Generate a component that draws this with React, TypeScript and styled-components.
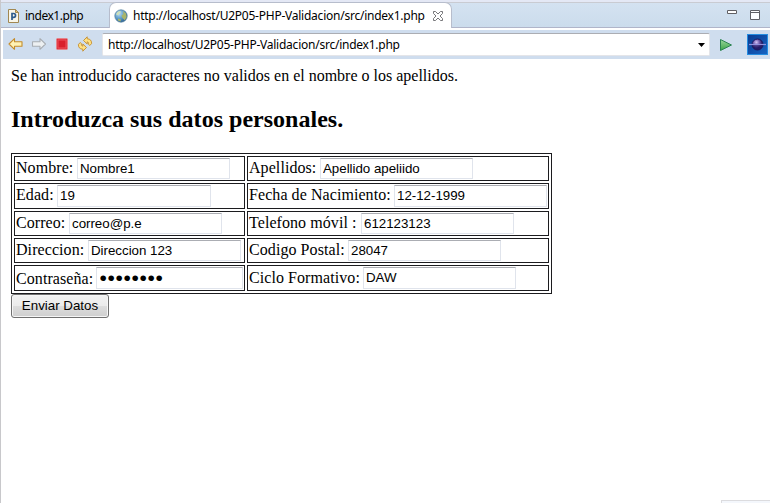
import React from "react";
import styled, { createGlobalStyle } from "styled-components";

const GlobalStyle = createGlobalStyle`
  * { box-sizing: border-box; }
  html, body { margin: 0; background: #fff; }
  body { overflow: hidden; }
`;

const Window = styled.div`
  width: 770px;
  height: 503px;
  display: flex;
  flex-direction: column;
  background: #fff;
  border-left: 1px solid #c8c8cb;
  overflow: hidden;
  font-family: "Noto Sans", "Open Sans", sans-serif;
`;

const TabBar = styled.div`
  flex: none;
  height: 28px;
  display: flex;
  background: linear-gradient(#e4e8f5 0 2px, #c9cbd2 2px 3px, #d4e2f1 3px, #cbdcec 27px, #b0b5c9 27px);
`;

const Tab = styled.div<{ $active?: boolean; $width: number }>`
  width: ${(p) => p.$width}px;
  height: ${(p) => (p.$active ? 26 : 25)}px;
  margin-top: 2px;
  display: flex;
  align-items: center;
  background: ${(p) => (p.$active ? "#fff" : "transparent")};
  border: ${(p) => (p.$active ? "1px solid #b7bdcc" : "0")};
  border-bottom: 0;
  border-radius: ${(p) => (p.$active ? "7px 7px 0 0" : "7px 0 0 0")};
  padding: ${(p) => (p.$active ? "1px 0 0 4px" : "3px 0 0 7px")};
  svg { flex: none; }
`;

const UiText = styled.span<{ $tracking: number }>`
  font-size: 12px;
  letter-spacing: ${(p) => p.$tracking}px;
  line-height: 16px;
  color: #000;
  white-space: nowrap;
`;

const TabLabel = styled(UiText)<{ $width: number }>`
  width: ${(p) => p.$width}px;
  margin-left: 5px;
`;

const WindowControls = styled.div`
  margin-left: auto;
  padding: 10px 10px 0 0;
  display: flex;
  gap: 13px;
`;

const Toolbar = styled.div`
  flex: none;
  height: 29px;
  margin: 2px 0 0 2px;
  display: flex;
  align-items: center;
  background: #cfddee;
`;

const NavIcons = styled.div`
  width: 99px;
  padding: 0 0 1px 5px;
  display: flex;
  gap: 7px;
`;

const AddressBox = styled.div`
  width: 608px;
  height: 23px;
  display: flex;
  align-items: center;
  justify-content: space-between;
  padding: 1px 4px 0 5px;
  background: #fff;
  border: 1px solid #e4e5e9;
  border-top-color: #abadb3;
  border-radius: 2px;
`;

const Page = styled.main`
  padding: 8px 0 0 10px;
  font-family: "Liberation Serif", "Times New Roman", serif;
  font-size: 16px;
  line-height: 18px;
  color: #000;
`;

const Message = styled.p`
  margin: 0;
  white-space: nowrap;
`;

const Heading = styled.h2`
  height: 48px;
  margin: 0;
  padding-top: 20px;
  font-size: 24px;
  line-height: 28px;
  letter-spacing: 0.02px;
  white-space: nowrap;
`;

const FormTable = styled.div`
  width: 541px;
  height: 141px;
  margin-top: 20px;
  padding: 2px;
  border: 1px solid #1c1c1f;
  display: grid;
  grid-template-columns: 231px 302px;
  grid-template-rows: 25px 26px 25px 25px 26px;
  gap: 2px;
`;

const Cell = styled.label<{ $labelWidth: number; $line: number }>`
  border: 1px solid #1c1c1f;
  padding: 1px;
  display: grid;
  grid-template-columns: ${(p) => p.$labelWidth}px auto;
  grid-template-rows: 100%;
  justify-content: start;
  line-height: ${(p) => p.$line}px;
  letter-spacing: 0.07px;
  white-space: nowrap;
`;

const Field = styled.input<{ $width: number }>`
  width: ${(p) => p.$width}px;
  height: 100%;
  margin: 0;
  padding: 0 2px 1px 2px;
  border: 1px solid #e0e4ec;
  border-top-color: #abadb3;
  outline: none;
  background: #fff;
  color: #000;
  font-family: "Liberation Sans", Arial, sans-serif;
  font-size: 13.33px;
  letter-spacing: -0.02px;
  &[type="password"] {
    padding: 0 0 0 2.5px;
    font-size: 21px;
    line-height: 20px;
    letter-spacing: 0.65px;
  }
`;

const Submit = styled.button`
  display: block;
  width: 98px;
  height: 24px;
  padding: 0 0 1px;
  border: 1px solid #707070;
  border-radius: 3px;
  box-shadow: inset 0 0 0 1px #f6f6f6;
  background: linear-gradient(#f2f2f2, #ebebeb 49%, #dddddd 50%, #cfcfcf);
  color: #000;
  font-family: "Liberation Sans", Arial, sans-serif;
  font-size: 13.33px;
`;

const StatusCorner = styled.div`
  width: 49px;
  height: 3px;
  margin: auto 0 0 auto;
  flex: none;
  border: 1px solid #dcdcdf;
  border-width: 1px 0 0 1px;
  background: #f4f7fc;
`;

const PhpIcon = () => (
  <svg width="12" height="14" viewBox="0 0 12 14">
    <path d="M.5 .5h7l3 3v10h-10z" fill="#f8f6ea" stroke="#a18852" />
    <path d="M7.500 .5v3h3z" fill="#e5c778" stroke="#a18852" />
    <path d="M4 11V4.500h1.600a1.700 1.700 0 0 1 0 3.800H4" fill="none" stroke="#2c5b8d" strokeWidth="1.700" />
  </svg>
);

const GlobeIcon = () => (
  <svg width="14" height="14" viewBox="0 0 14 14">
    <defs>
      <radialGradient id="globe" cx=".35" cy=".3" r=".75">
        <stop offset="0" stopColor="#b9ddf5" />
        <stop offset=".55" stopColor="#5d9bc9" />
        <stop offset="1" stopColor="#2b5f8e" />
      </radialGradient>
    </defs>
    <circle cx="7" cy="7" r="6.2" fill="url(#globe)" stroke="#527e9c" strokeWidth=".7" />
    <path d="M9 2l3 2.500.7 3.500-2 3.200L8.500 9 7.500 6.500 9.500 5zM4 9.500l3 1L6.500 12.500 4 11.500z" fill="#a9b56a" />
    <path d="M2 5.500 3.500 3 6 2 7 3 5 5 4.500 6.500z" fill="#cfe0b8" />
  </svg>
);

const CloseIcon = () => (
  <svg width="12" height="12" viewBox="0 0 12 12">
    <path d="M1.500 1.500h2L6 4 8.500 1.500h2v2L8 6l2.500 2.500v2h-2L6 8l-2.500 2.500h-2v-2L4 6 1.500 3.500z" fill="#fff" stroke="#68686b" strokeWidth=".9" />
  </svg>
);

const ArrowIcon = ({ forward = false }: { forward?: boolean }) => (
  <svg width="16" height="16" viewBox="0 0 16 16">
    <path
      d={forward ? "M14.500 8 9 2.700v3H1.500v4.600H9v3z" : "M1 8 6.500 2.700v3H14v4.600H6.500v3z"}
      fill={forward ? "#edf0f2" : "#fff2b5"}
      stroke={forward ? "#a8adb3" : "#c48c2c"}
      strokeWidth="1.100"
      strokeLinejoin="round"
    />
  </svg>
);

const StopIcon = () => (
  <svg width="16" height="16" viewBox="0 0 16 16">
    <rect x="2.500" y="2.500" width="11" height="11" rx="1" fill="#d92a36" stroke="#e58288" />
    <rect x="4" y="4" width="8" height="8" fill="#d91f2c" stroke="#ee525c" />
  </svg>
);

const RefreshIcon = () => (
  <svg width="16" height="16" viewBox="0 0 16 16" fill="#ffe184" stroke="#c48c2c" strokeWidth=".9" strokeLinejoin="round">
    <path d="M6.500 4.500 10.200 .8V2.800c3 0 4.700 2 4.300 4.900L12.700 9.500l-1.200-1.300c.2-1.500-.2-2.200-1.300-2.400v2.200z" />
    <path d="M9.500 11.500 5.800 15.200V13.200c-3 0-4.700-2-4.300-4.900L3.300 6.500l1.200 1.300c-.2 1.500.2 2.200 1.300 2.400v-2.200z" />
  </svg>
);

const DropIcon = () => (
  <svg width="7" height="4" viewBox="0 0 7 4"><path d="M0 0h7L3.500 4z" /></svg>
);

const Go = styled.div`
  margin-left: 9px;
  height: 14px;
  display: flex;
`;

const GoIcon = () => (
  <svg width="14" height="14" viewBox="0 0 14 14">
    <defs><linearGradient id="go" x2="0" y2="1"><stop stopColor="#9ad69c" /><stop offset="1" stopColor="#3ca549" /></linearGradient></defs>
    <path d="M1.500 1.500 12.500 7 1.500 12.500z" fill="url(#go)" stroke="#2c8453" />
  </svg>
);

const Brand = styled.div`
  margin-left: 14px;
  height: 21px;
`;

const BrandIcon = () => (
  <svg width="21" height="21" viewBox="0 0 21 21">
    <defs>
      <linearGradient id="sky" x2="1" y2="1"><stop stopColor="#083b92" /><stop offset="1" stopColor="#1764c2" /></linearGradient>
      <radialGradient id="planet" cx=".4" cy=".3"><stop stopColor="#d4c5f5" /><stop offset=".5" stopColor="#7864b5" /><stop offset="1" stopColor="#241c68" /></radialGradient>
    </defs>
    <rect x=".5" y=".5" width="20" height="20" fill="url(#sky)" stroke="#258ce0" />
    <circle cx="10.500" cy="10.500" r="5.500" fill="url(#planet)" stroke="#1b1960" />
    <path d="M2 10.500h17" stroke="#8f90dc" strokeWidth="1.200" />
    <path d="M6 12h9" stroke="#30206d" />
  </svg>
);

const MinimizeIcon = () => (
  <svg width="10" height="10" viewBox="0 0 10 10"><path d="M.5 .5h9v3h-9z" fill="#fff" stroke="#606064" /></svg>
);

const MaximizeIcon = () => (
  <svg width="10" height="10" viewBox="0 0 10 10"><path d="M.5 .5h9v9h-9zM.5 2.500h9" fill="#fff" stroke="#606064" /></svg>
);

type FieldData = { label: string; value: string; labelWidth: number; width?: number; secret?: boolean; line?: number };

const fields: FieldData[] = [
  { label: "Nombre:", value: "Nombre1", labelWidth: 61 },
  { label: "Apellidos:", value: "Apellido apeliido", labelWidth: 71 },
  { label: "Edad:", value: "19", labelWidth: 41, width: 154 },
  { label: "Fecha de Nacimiento:", value: "12-12-1999", labelWidth: 145 },
  { label: "Correo:", value: "correo@p.e", labelWidth: 53 },
  { label: "Telefono móvil :", value: "612123123", labelWidth: 112 },
  { label: "Direccion:", value: "Direccion 123", labelWidth: 72 },
  { label: "Codigo Postal:", value: "28047", labelWidth: 99 },
  { label: "Contraseña:", value: "password", labelWidth: 80, width: 147, secret: true, line: 24 },
  { label: "Ciclo Formativo:", value: "DAW", labelWidth: 114, line: 22 },
];

const url = "http://localhost/U2P05-PHP-Validacion/src/index1.php";

export default function App() {
  return (
    <>
      <GlobalStyle />
      <Window>
        <TabBar>
          <Tab $width={108}>
            <PhpIcon />
            <TabLabel $width={65} $tracking={-0.48}>index1.php</TabLabel>
          </Tab>
          <Tab $active $width={343}>
            <GlobeIcon />
            <TabLabel $width={299} $tracking={-0.24}>{url}</TabLabel>
            <CloseIcon />
          </Tab>
          <WindowControls>
            <MinimizeIcon />
            <MaximizeIcon />
          </WindowControls>
        </TabBar>
        <Toolbar>
          <NavIcons>
            <ArrowIcon />
            <ArrowIcon forward />
            <StopIcon />
            <RefreshIcon />
          </NavIcons>
          <AddressBox>
            <UiText $tracking={-0.24}>{url}</UiText>
            <DropIcon />
          </AddressBox>
          <Go><GoIcon /></Go>
          <Brand><BrandIcon /></Brand>
        </Toolbar>
        <Page>
          <Message>Se han introducido caracteres no validos en el nombre o los apellidos.</Message>
          <Heading>Introduzca sus datos personales.</Heading>
          <FormTable>
            {fields.map((f) => (
              <Cell key={f.label} $labelWidth={f.labelWidth} $line={f.line ?? 20}>
                {f.label}
                <Field $width={f.width ?? 153} type={f.secret ? "password" : "text"} defaultValue={f.value} />
              </Cell>
            ))}
          </FormTable>
          <Submit type="button">Enviar Datos</Submit>
        </Page>
        <StatusCorner />
      </Window>
    </>
  );
}
